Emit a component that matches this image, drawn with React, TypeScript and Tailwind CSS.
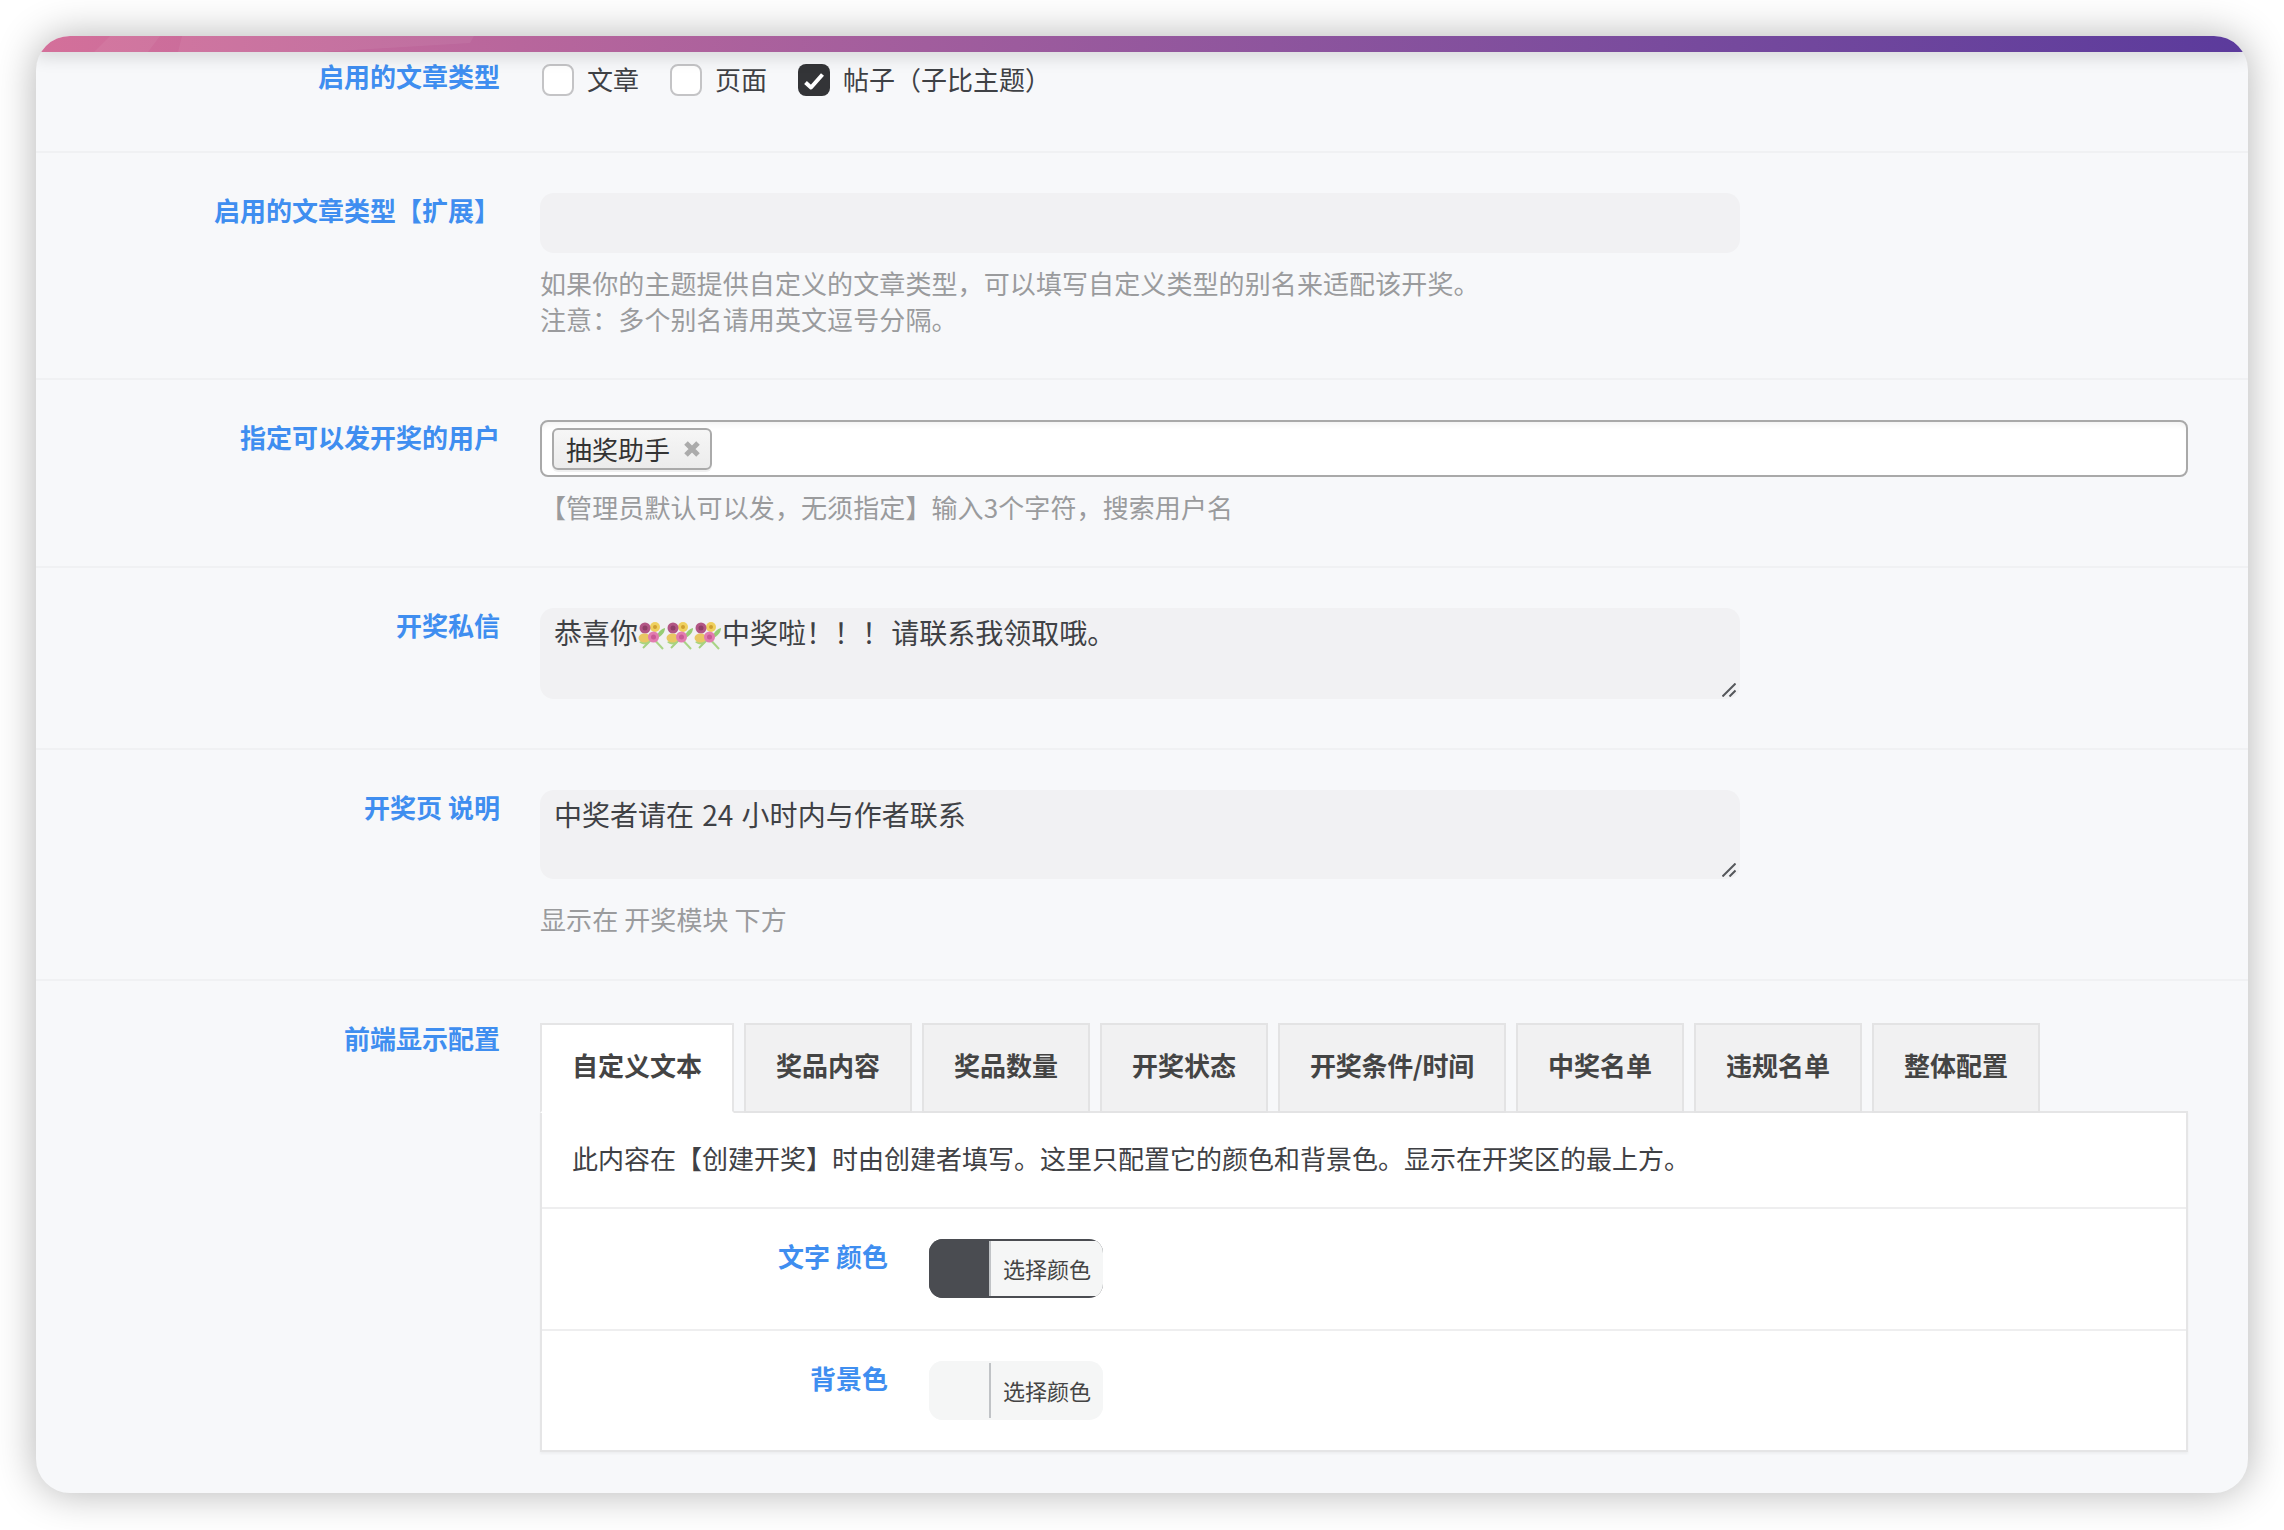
const sans = "font-['Noto_Sans_CJK_SC','Noto_Sans',sans-serif]";

const tabs = ["自定义文本", "奖品内容", "奖品数量", "开奖状态", "开奖条件/时间", "中奖名单", "违规名单", "整体配置"];

function Bouquet() {
  return (
    <svg viewBox="0 0 28 30" className="inline-block w-[28px] h-[30px] align-[-7px]">
      <path d="M13 15 L25 28" stroke="#a9d486" strokeWidth="2" />
      <path d="M15 17 L5 27" stroke="#a5d080" strokeWidth="2" />
      <path d="M19 17 C24 15 27 11 27 7 C23 8 19 12 18 17 Z" fill="#96cc74" />
      <path d="M10 23 C6 24 3 23 1 21 C5 19 8 19 11 20 Z" fill="#a9d47f" />
      <circle cx="17" cy="6" r="5" fill="#efd05e" />
      <circle cx="17" cy="6" r="2" fill="#cfa030" />
      <circle cx="7" cy="7" r="5.5" fill="#b25685" />
      <circle cx="7" cy="7" r="2.5" fill="#8f3f68" />
      <ellipse cx="6.5" cy="17" rx="6" ry="4.5" fill="#e9c763" />
      <circle cx="15.5" cy="16" r="5.5" fill="#e27cb0" />
      <circle cx="15.5" cy="16" r="2.5" fill="#c95a95" />
    </svg>
  );
}

function ResizeHandle() {
  return (
    <svg viewBox="0 0 14 14" className="absolute right-[4px] bottom-[2px] w-[14px] h-[14px]">
      <path d="M0.5 13.5 L13.5 0.5 M7.5 13.5 L13.5 7.5" stroke="#55575b" strokeWidth="2" />
    </svg>
  );
}

function Checkbox({ label, checked }: { label: string; checked?: boolean }) {
  return (
    <label className="flex items-center gap-[13px] mr-[31px]">
      {checked ? (
        <span className="w-[32px] h-[32px] rounded-[8px] bg-[#333437] flex">
          <svg viewBox="0 0 32 32" className="w-[32px] h-[32px]">
            <path d="M7.5 18.5 L13 23.5 L24.5 10.5" fill="none" stroke="#fff" strokeWidth="4" strokeLinejoin="round" />
          </svg>
        </span>
      ) : (
        <span className="w-[32px] h-[32px] rounded-[8px] bg-white border-2 border-[#c4c4c6]" />
      )}
      <span className="text-[26px] leading-[36px] text-[#3f4145] -mt-[2px]">{label}</span>
    </label>
  );
}

function ColorButton({ color, line }: { color: string; line: string }) {
  return (
    <div className={`flex w-[174px] h-[59px] rounded-[14px] overflow-hidden ${line}`}>
      <div className={`w-[60px] ${color}`} />
      <div className="flex-1 bg-[#f5f6f6] my-[2px] border-l-2 border-[#c0c3c6] rounded-r-[6px] flex items-center justify-center text-[22px] text-[#444]">
        选择颜色
      </div>
    </div>
  );
}

function Row({
  label,
  children,
  className,
  labelClass = "-mt-[1px]",
}: {
  label: string;
  children: React.ReactNode;
  className: string;
  labelClass?: string;
}) {
  return (
    <div className={`flex border-b-2 border-[#f0f1f3] last:border-b-0 ${className}`}>
      <div className={`w-[464px] shrink-0 text-right text-[26px] leading-[36px] font-semibold text-[#3f8ef0] ${labelClass}`}>
        {label}
      </div>
      <div className="flex-1 min-w-0 ml-[40px] mr-[60px]">{children}</div>
    </div>
  );
}

function Hint({ children, className = "mt-[12px]" }: { children: React.ReactNode; className?: string }) {
  return <div className={`text-[26px] leading-[36px] tracking-[0.1px] text-[#9a9b9d] ${className}`}>{children}</div>;
}

export default function App() {
  return (
    <div className={`w-[2284px] h-[1530px] bg-white p-[36px] ${sans}`}>
      <div className="h-[1457px] rounded-[34px] overflow-hidden bg-[#f7f8fa] shadow-[0_0_40px_rgba(0,0,0,0.3)]">
        <div className="relative z-10 h-[16px] bg-gradient-to-r from-[#d4709a] to-[#5b3a9c] shadow-[0_4px_18px_rgba(0,0,0,0.16)]">
          {/* faint swooshes in the bar's left end */}
          <svg viewBox="0 0 500 16" className="absolute left-0 top-0 w-[500px] h-[16px]">
            <path d="M74 0 L124 0 L112 16 L58 16 Z" fill="#fff" fillOpacity="0.06" />
            <path d="M146 0 L438 0 L434 7 L284 16 L142 16 Z" fill="#fff" fillOpacity="0.06" />
          </svg>
        </div>

        <Row label="启用的文章类型" className="h-[101px] pt-[7px]">
          <div className="flex mt-[4px] ml-[2px]">
            <Checkbox label="文章" />
            <Checkbox label="页面" />
            <Checkbox label="帖子（子比主题）" checked />
          </div>
        </Row>

        <Row label="启用的文章类型【扩展】" className="pt-[40px] pb-[41px]">
          <div className="w-[1200px] h-[60px] rounded-[14px] bg-[#f1f1f3]" />
          <Hint>
            如果你的主题提供自定义的文章类型，可以填写自定义类型的别名来适配该开奖。
            <br />
            注意：多个别名请用英文逗号分隔。
          </Hint>
        </Row>

        <Row label="指定可以发开奖的用户" className="pt-[40px] pb-[41px]">
          <div className="h-[57px] rounded-[8px] border-2 border-[#a9a9a9] bg-white pl-[10px] flex items-center shadow-[inset_0_6px_6px_-4px_rgba(0,0,0,0.06)]">
            <div className="h-[42px] w-[160px] rounded-[6px] border-2 border-[#aaaaaa] bg-gradient-to-b from-[#f6f6f6] to-[#ececec] flex items-center pl-[12px] pb-[1px] text-[26px] text-[#333] shadow-[0_2px_0_rgba(0,0,0,0.06)]">
              抽奖助手
              <svg viewBox="0 0 18 18" className="w-[18px] h-[18px] ml-[13px] mt-[1px]">
                <path d="M3 3 L15 15 M15 3 L3 15" stroke="#ababab" strokeWidth="5" />
              </svg>
            </div>
          </div>
          <Hint>【管理员默认可以发，无须指定】输入3个字符，搜索用户名</Hint>
        </Row>

        <Row label="开奖私信" className="pt-[40px] pb-[49px]">
          <div className="relative w-[1200px] h-[91px] rounded-[14px] bg-[#f1f1f3] pl-[14px] pt-[6px] text-[28px] leading-[36px] text-[#3f4145]">
            恭喜你
            <Bouquet />
            <Bouquet />
            <Bouquet />
            中奖啦！！！<span className="-ml-[5px]"> 请联系我领取哦。</span>
            <ResizeHandle />
          </div>
        </Row>

        <Row label="开奖页 说明" className="pt-[40px] pb-[42px]">
          <div className="relative w-[1200px] h-[89px] rounded-[14px] bg-[#f1f1f3] pl-[14px] pt-[6px] text-[28px] leading-[36px] [word-spacing:2px] text-[#3f4145]">
            中奖者请在 24 小时内与作者联系
            <ResizeHandle />
          </div>
          <Hint className="mt-[22px]">显示在 开奖模块 下方</Hint>
        </Row>

        <Row label="前端显示配置" className="pt-[42px]" labelClass="-mt-[3px]">
          <div className="flex relative z-10 -mb-[2px]">
            {tabs.map((tab, i) => (
              <div
                key={tab}
                className={`h-[90px] px-[30px] mr-[10px] border-2 flex items-center justify-center text-[26px] font-semibold text-[#444] pb-[7px] ${
                  i === 0
                    ? "bg-white border-[#e5e5e6] border-b-white"
                    : "bg-[#f1f1f2] border-[#e3e3e4]"
                } ${i === 4 ? "tracking-[-0.3px]" : ""}`}
              >
                {tab}
              </div>
            ))}
          </div>
          <div className="h-[341px] bg-white border-2 border-[#e5e5e6] shadow-[0_2px_2px_rgba(0,0,0,0.04)]">
            <div className="h-[96px] border-b-2 border-[#eeeeef] pl-[30px] pb-[5px] flex items-center text-[26px] text-[#3f4145]">
              此内容在【创建开奖】时由创建者填写。这里只配置它的颜色和背景色。显示在开奖区的最上方。
            </div>
            <div className="h-[122px] border-b-2 border-[#eeeeef] flex">
              <div className="w-[346px] pt-[29px] text-right text-[26px] leading-[36px] font-semibold text-[#3f8ef0]">
                文字 颜色
              </div>
              <div className="ml-[41px] pt-[30px]">
                <ColorButton color="bg-[#4a4c51]" line="bg-[#4a4c51]" />
              </div>
            </div>
            <div className="flex">
              <div className="w-[346px] pt-[29px] text-right text-[26px] leading-[36px] font-semibold text-[#3f8ef0]">
                背景色
              </div>
              <div className="ml-[41px] pt-[30px]">
                <ColorButton color="bg-[#f5f6f6]" line="bg-[#f5f6f6]" />
              </div>
            </div>
          </div>
        </Row>
      </div>
    </div>
  );
}
